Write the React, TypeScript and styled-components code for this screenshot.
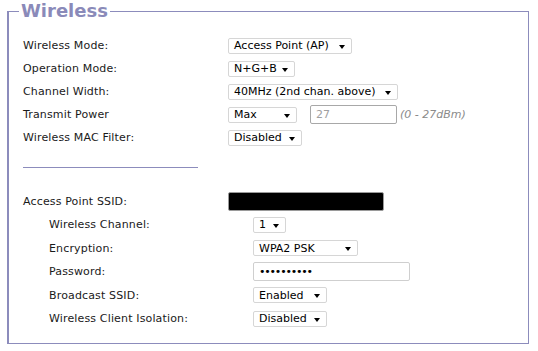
import React from 'react';
import styled, { createGlobalStyle } from 'styled-components';

const GlobalStyle = createGlobalStyle`
  body {
    margin: 0;
    background: #ffffff;
    font-family: 'DejaVu Sans', Verdana, sans-serif;
    font-size: 11px;
    color: #1a1a1a;
  }
`;

const Panel = styled.fieldset`
  margin: 0 9px 0 7px;
  padding: 0;
  border: 1px solid #8c8cbc;
  border-left-width: 2px;
  min-width: 0;
`;

const Legend = styled.legend`
  margin-left: 10px;
  padding: 0 2px;
  font-size: 18px;
  line-height: 22px;
  font-weight: bold;
  color: #8a8ab9;
`;

const Body = styled.div`
  padding: 12px 0 12px 14px;
`;

const Row = styled.div`
  display: flex;
  align-items: center;
  height: 23px;
`;

const SubSection = styled.div`
  padding-left: 26px;
`;

const SubRow = styled(Row)`
  height: 23.5px;
`;

const Label = styled.div<{ $width?: number }>`
  width: ${(p) => p.$width ?? 205}px;
  flex-shrink: 0;
  letter-spacing: 0.15px;
`;

const Controls = styled.div`
  display: flex;
  align-items: center;
`;

const SelectBox = styled.div<{ $width: number }>`
  box-sizing: border-box;
  width: ${(p) => p.$width}px;
  height: 16px;
  border: 1px solid #d6d6d6;
  border-radius: 2px;
  background: #ffffff;
  display: flex;
  align-items: center;
  justify-content: space-between;
  padding: 0 6px 0 5px;
  color: #000000;
`;

const SelectValue = styled.span`
  white-space: nowrap;
`;

const Arrow = styled.span`
  width: 0;
  height: 0;
  margin-top: 2px;
  border-left: 3.5px solid transparent;
  border-right: 3.5px solid transparent;
  border-top: 4px solid #000000;
`;

const TextInput = styled.input<{ $width: number; $muted?: boolean }>`
  box-sizing: border-box;
  width: ${(p) => p.$width}px;
  height: 19px;
  margin-left: 13px;
  padding: 0 5px;
  border: 1px solid #a8a8a8;
  border-radius: 2px;
  font-family: 'DejaVu Sans', Verdana, sans-serif;
  font-size: 11px;
  color: ${(p) => (p.$muted ? '#a0a0a0' : '#000000')};
  outline: none;
`;

const PasswordInput = styled(TextInput)`
  margin-left: 0;
  border-color: #cfcfcf;
  font-size: 11px;
  letter-spacing: -1.2px;
`;

const Hint = styled.span`
  margin-left: 3px;
  font-style: italic;
  color: #8a8a8a;
`;

const Divider = styled.div`
  width: 175px;
  height: 1px;
  background: #8c8cbc;
  margin: 18px 0 22px;
`;

const SsidBox = styled.div`
  width: 156px;
  height: 19px;
  box-sizing: border-box;
  background: #000000;
  border: 1px solid #9a9a9a;
  border-radius: 2px;
`;

type SelectProps = { value: string; width: number };

const Select: React.FC<SelectProps> = ({ value, width }) => (
  <SelectBox $width={width}>
    <SelectValue>{value}</SelectValue>
    <Arrow />
  </SelectBox>
);

type FormRow = { label: string; control: React.ReactNode };

const App: React.FC = () => {
  const topRows: FormRow[] = [
    { label: 'Wireless Mode:', control: <Select value="Access Point (AP)" width={124} /> },
    { label: 'Operation Mode:', control: <Select value="N+G+B" width={67} /> },
    { label: 'Channel Width:', control: <Select value="40MHz (2nd chan. above)" width={170} /> },
    {
      label: 'Transmit Power',
      control: (
        <>
          <Select value="Max" width={69} />
          <TextInput $width={87} readOnly value="27" $muted />
          <Hint>(0 - 27dBm)</Hint>
        </>
      ),
    },
    { label: 'Wireless MAC Filter:', control: <Select value="Disabled" width={74} /> },
  ];

  const subRows: FormRow[] = [
    { label: 'Wireless Channel:', control: <Select value="1" width={33} /> },
    { label: 'Encryption:', control: <Select value="WPA2 PSK" width={105} /> },
    {
      label: 'Password:',
      control: <PasswordInput type="password" $width={157} readOnly value="xxxxxxxxxx" />,
    },
    { label: 'Broadcast SSID:', control: <Select value="Enabled" width={74} /> },
    { label: 'Wireless Client Isolation:', control: <Select value="Disabled" width={74} /> },
  ];

  return (
    <>
      <GlobalStyle />
      <Panel>
        <Legend>Wireless</Legend>
        <Body>
          {topRows.map((row) => (
            <Row key={row.label}>
              <Label>{row.label}</Label>
              <Controls>{row.control}</Controls>
            </Row>
          ))}
          <Divider />
          <Row>
            <Label>Access Point SSID:</Label>
            <Controls>
              <SsidBox />
            </Controls>
          </Row>
          <SubSection>
            {subRows.map((row) => (
              <SubRow key={row.label}>
                <Label $width={204}>{row.label}</Label>
                <Controls>{row.control}</Controls>
              </SubRow>
            ))}
          </SubSection>
        </Body>
      </Panel>
    </>
  );
};

export default App;
